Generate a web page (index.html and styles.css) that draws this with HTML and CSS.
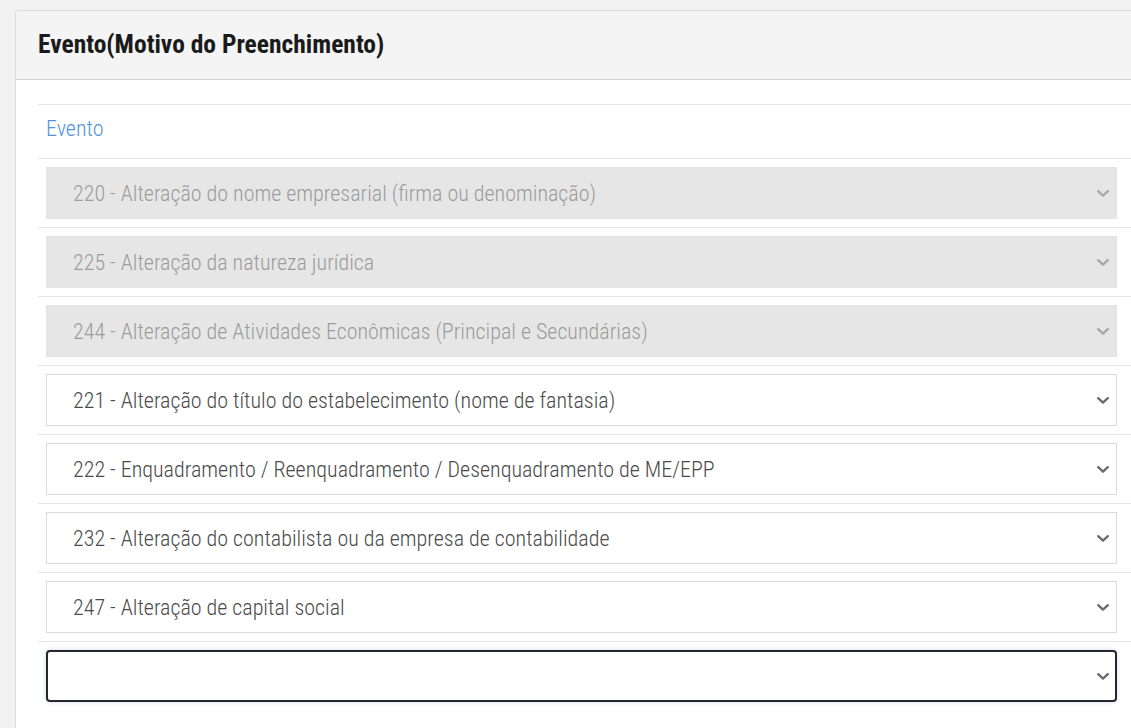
FILE: index.html
```html
<!DOCTYPE html>
<html lang="pt-BR">
<head>
<meta charset="utf-8">
<title>Evento</title>
<link rel="stylesheet" href="styles.css">
</head>
<body>
<div class="panel">
  <div class="panel-heading">Evento(Motivo do Preenchimento)</div>
  <div class="panel-body">
    <div class="row label-row"><span class="label">Evento</span></div>
    <div class="row">
      <div class="field">
        <select class="sel" disabled><option>220 - Alteração do nome empresarial (firma ou denominação)</option></select>
        <svg class="chev dis" viewBox="0 0 12 7"><path d="M1.2 1.2 L6 5.6 L10.8 1.2"/></svg>
      </div>
    </div>
    <div class="row">
      <div class="field">
        <select class="sel" disabled><option>225 - Alteração da natureza jurídica</option></select>
        <svg class="chev dis" viewBox="0 0 12 7"><path d="M1.2 1.2 L6 5.6 L10.8 1.2"/></svg>
      </div>
    </div>
    <div class="row">
      <div class="field">
        <select class="sel" disabled><option>244 - Alteração de Atividades Econômicas (Principal e Secundárias)</option></select>
        <svg class="chev dis" viewBox="0 0 12 7"><path d="M1.2 1.2 L6 5.6 L10.8 1.2"/></svg>
      </div>
    </div>
    <div class="row">
      <div class="field">
        <select class="sel"><option>221 - Alteração do título do estabelecimento (nome de fantasia)</option></select>
        <svg class="chev" viewBox="0 0 12 7"><path d="M1.2 1.2 L6 5.6 L10.8 1.2"/></svg>
      </div>
    </div>
    <div class="row">
      <div class="field">
        <select class="sel"><option>222 - Enquadramento / Reenquadramento / Desenquadramento de ME/EPP</option></select>
        <svg class="chev" viewBox="0 0 12 7"><path d="M1.2 1.2 L6 5.6 L10.8 1.2"/></svg>
      </div>
    </div>
    <div class="row">
      <div class="field">
        <select class="sel"><option>232 - Alteração do contabilista ou da empresa de contabilidade</option></select>
        <svg class="chev" viewBox="0 0 12 7"><path d="M1.2 1.2 L6 5.6 L10.8 1.2"/></svg>
      </div>
    </div>
    <div class="row">
      <div class="field">
        <select class="sel"><option>247 - Alteração de capital social</option></select>
        <svg class="chev" viewBox="0 0 12 7"><path d="M1.2 1.2 L6 5.6 L10.8 1.2"/></svg>
      </div>
    </div>
    <div class="row">
      <div class="field">
        <select class="sel focus"><option></option></select>
        <svg class="chev" viewBox="0 0 12 7"><path d="M1.2 1.2 L6 5.6 L10.8 1.2"/></svg>
      </div>
    </div>
  </div>
</div>
</body>
</html>
```

FILE: styles.css
```css
html, body {
  margin: 0;
  padding: 0;
}
body {
  background: #f1f1f1;
  padding: 10px 0 0 15px;
  height: 728px;
  box-sizing: border-box;
  overflow: hidden;
  font-family: "Roboto", "Liberation Sans", sans-serif;
  font-stretch: 75%;
}
.panel {
  background: #fff;
  border: 1px solid #dcdcdc;
  border-right: none;
  border-top-left-radius: 4px;
  height: 740px;
}
.panel-heading {
  height: 69px;
  box-sizing: border-box;
  padding-left: 22px;
  padding-bottom: 2px;
  display: flex;
  align-items: center;
  background: #f4f4f4;
  border-bottom: 1px solid #d3d3db;
  border-top-left-radius: 4px;
  font-size: 25.5px;
  font-weight: 700;
  color: #1a1a1a;
}
.panel-body {
  padding: 24px 0 0 22px;
}
.row {
  border-top: 1px solid #e6e6e6;
  padding: 8px 14px 8px 8px;
}
.label-row {
  height: 54px;
  box-sizing: border-box;
  display: flex;
  align-items: center;
  padding-top: 0;
  padding-bottom: 7px;
}
.label {
  font-size: 22px;
  font-weight: 300;
  color: #4f94d8;
}
.field {
  position: relative;
}
.sel {
  appearance: none;
  -webkit-appearance: none;
  display: block;
  width: 100%;
  height: 52px;
  margin: 0;
  box-sizing: border-box;
  border: 1px solid #dadada;
  border-radius: 0;
  background: #fff;
  padding: 0 40px 0 26px;
  font-family: "Roboto", "Liberation Sans", sans-serif;
  font-stretch: 75%;
  font-size: 22px;
  font-weight: 300;
  color: #4a4a4a;
  outline: none;
}
.sel:disabled {
  background: #e6e6e6;
  border-color: #e3e3e3;
  color: #9c9c9c;
  opacity: 1;
}
.sel.focus {
  border: 2px solid #262626;
  border-radius: 4px;
  box-shadow: 0 0 4px rgba(102, 150, 220, 0.35);
}
.chev {
  position: absolute;
  right: 8px;
  top: 23px;
  width: 12px;
  height: 7px;
  fill: none;
  stroke: #6c6c6c;
  stroke-width: 2.4;
  stroke-linecap: round;
  stroke-linejoin: round;
}
.chev.dis {
  stroke: #a8a8a8;
}
```
